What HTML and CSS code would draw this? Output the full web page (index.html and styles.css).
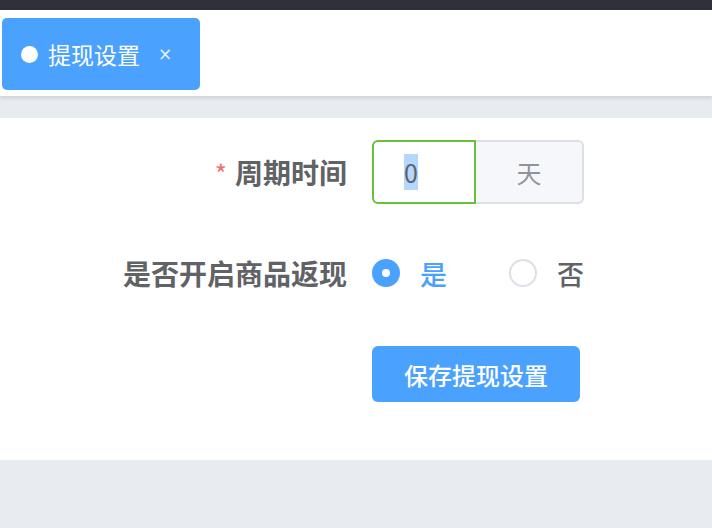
FILE: index.html
```html
<!DOCTYPE html>
<html lang="zh-CN">
<head>
<meta charset="UTF-8">
<meta name="viewport" content="width=device-width, initial-scale=1.0">
<title>提现设置</title>
<link rel="stylesheet" href="styles.css">
</head>
<body>
<div class="topbar"></div>
<div class="tabs">
  <div class="tag">
    <span class="tag-dot"></span>
    <span class="tag-text">提现设置</span>
    <span class="tag-close">×</span>
  </div>
</div>

<div class="panel">
  <div class="form">
    <div class="form-item">
      <label class="form-label"><span class="required">*</span>周期时间</label>
      <div class="form-content">
        <div class="input-group">
          <div class="input"><span class="selected">0</span></div>
          <div class="input-append">天</div>
        </div>
      </div>
    </div>

    <div class="form-item">
      <label class="form-label">是否开启商品返现</label>
      <div class="form-content">
        <div class="radio checked">
          <span class="radio-inner"></span>
          <span class="radio-label">是</span>
        </div>
        <div class="radio">
          <span class="radio-inner"></span>
          <span class="radio-label">否</span>
        </div>
      </div>
    </div>

    <div class="form-item">
      <label class="form-label"></label>
      <div class="form-content">
        <button class="btn-primary">保存提现设置</button>
      </div>
    </div>
  </div>
</div>
</body>
</html>
```

FILE: styles.css
```css
body {
  margin: 0;
  background: #e8ecf0;
  font-family: "Noto Sans CJK SC", "Noto Sans", sans-serif;
}
.topbar {
  height: 10px;
  background: #30303a;
}
.tabs {
  height: 86px;
  background: #fff;
  padding: 8px 0 0 2px;
  box-sizing: border-box;
  box-shadow: 0 2px 4px rgba(0, 0, 0, 0.12);
  position: relative;
}
.tag {
  display: flex;
  align-items: center;
  width: 198px;
  height: 72px;
  box-sizing: border-box;
  padding-left: 19px;
  background: #4aa1fe;
  border-radius: 5px;
  color: #fff;
}
.tag-dot {
  width: 17px;
  height: 17px;
  border-radius: 50%;
  background: #fff;
  margin-right: 10px;
}
.tag-text {
  font-size: 23px;
}
.tag-close {
  font-size: 17px;
  margin-left: 18px;
  font-family: "DejaVu Sans", sans-serif;
  color: #e6f1ff;
}
.panel {
  margin-top: 22px;
  height: 342px;
  background: #fff;
  padding-top: 22px;
  box-sizing: border-box;
}
.form-item {
  display: flex;
  align-items: center;
  height: 64px;
  margin-bottom: 37px;
}
.form-label {
  width: 347px;
  padding-right: 25px;
  text-align: right;
  font-size: 28px;
  font-weight: 600;
  color: #606266;
}
.required {
  color: #f56c6c;
  margin-right: 8px;
  font-size: 26px;
  font-weight: 400;
}
.form-content {
  display: flex;
  align-items: center;
}
.input-group {
  display: flex;
  height: 64px;
}
.input {
  width: 104px;
  box-sizing: border-box;
  border: 2px solid #67c23a;
  border-radius: 6px 0 0 6px;
  padding-left: 30px;
  display: flex;
  align-items: center;
  font-size: 25px;
  color: #606266;
}
.selected {
  background: #b3d7ff;
  line-height: 36px;
}
.input-append {
  width: 108px;
  box-sizing: border-box;
  background: #f5f7fa;
  border: 2px solid #dcdfe6;
  border-left: 0;
  border-radius: 0 6px 6px 0;
  display: flex;
  align-items: center;
  justify-content: center;
  font-size: 25px;
  color: #909399;
}
.radio {
  display: flex;
  align-items: center;
  margin-right: 62px;
}
.radio-inner {
  width: 28px;
  height: 28px;
  box-sizing: border-box;
  border: 2px solid #dcdfe6;
  border-radius: 50%;
  background: #fff;
  position: relative;
}
.radio.checked .radio-inner {
  background: #4aa1fe;
  border-color: #4aa1fe;
}
.radio.checked .radio-inner::after {
  content: "";
  position: absolute;
  left: 8px;
  top: 8px;
  width: 8px;
  height: 8px;
  border-radius: 50%;
  background: #fff;
}
.radio-label {
  margin-left: 20px;
  font-size: 27px;
  font-weight: 500;
  color: #606266;
}
.radio.checked .radio-label {
  color: #4aa1fe;
}
.btn-primary {
  width: 208px;
  height: 56px;
  border: 0;
  border-radius: 6px;
  background: #4aa1fe;
  color: #fff;
  font-family: inherit;
  font-size: 24px;
  font-weight: 500;
  cursor: pointer;
}
```
